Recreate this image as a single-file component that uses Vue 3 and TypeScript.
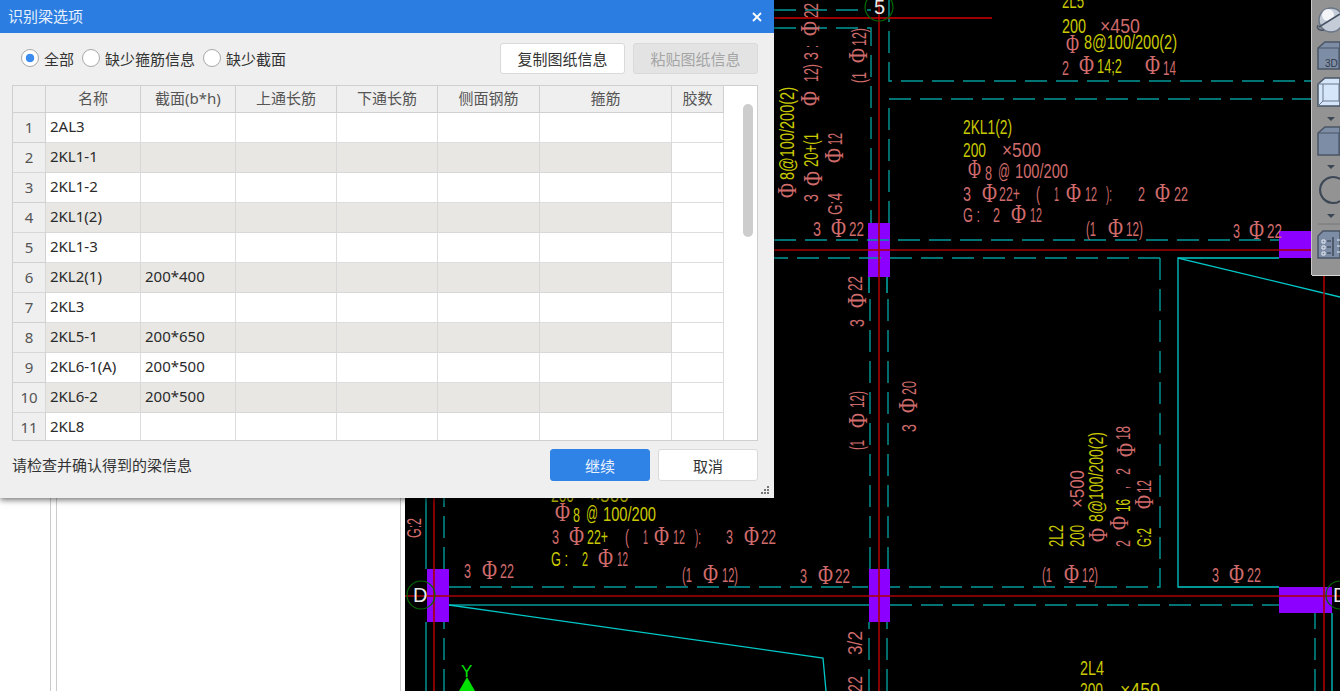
<script setup lang="ts">
interface CadText {
  x: number
  y: number
  s: string
  c: string
  w: number
  v: boolean
  phi: boolean
}

const pink = '#cf6b6b'
const yellow = '#c9c900'
const teal = '#009a9a'
const cyan = '#00c8c8'
const red = '#a80000'

const columns = ['', '名称', '截面(b*h)', '上通长筋', '下通长筋', '侧面钢筋', '箍筋', '胶数']

const rows = [
  ['2AL3', ''],
  ['2KL1-1', ''],
  ['2KL1-2', ''],
  ['2KL1(2)', ''],
  ['2KL1-3', ''],
  ['2KL2(1)', '200*400'],
  ['2KL3', ''],
  ['2KL5-1', '200*650'],
  ['2KL6-1(A)', '200*500'],
  ['2KL6-2', '200*500'],
  ['2KL8', '']
]

// 图纸上的文字
const texts: CadText[] = []
const t = (x: number, y: number, s: string, c: string, w: number, v = false) =>
  texts.push({ x, y, s, c, w, v, phi: false })
// 钢筋符号比文字大，基线下移一点
const p = (x: number, y: number, w = 15, v = false) =>
  v
    ? texts.push({ x: x + 3, y, s: 'Φ', c: pink, w, v, phi: true })
    : texts.push({ x, y: y + 3, s: 'Φ', c: pink, w, v, phi: true })

t(1062, 8, '2L5', yellow, 22)
t(1062, 33, '200', yellow, 24)
t(1100, 33, '×450', pink, 40)
p(1066, 50, 13)
t(1084, 49, '8@100/200(2)', yellow, 93)
t(1062, 75, '2', pink, 7)
p(1079, 71)
t(1097, 73, '14;2', yellow, 25)
p(1145, 71)
t(1163, 75, '14', pink, 13)

t(963, 134, '2KL1(2)', yellow, 49)
t(963, 157, '200', yellow, 23)
t(1002, 157, '×500', pink, 39)
p(968, 175, 13)
t(985, 180, '8', pink, 7)
t(998, 178, '@', pink, 12)
t(1015, 178, '100/200', pink, 53)
t(963, 201, '3', pink, 8)
p(982, 199)
t(999, 201, '22+', pink, 21)
t(1036, 201, '(', pink, 4)
t(1054, 201, '1', pink, 5)
p(1066, 199)
t(1085, 201, '12', pink, 12)
t(1106, 201, '):', pink, 6)
t(1138, 201, '2', pink, 7)
p(1155, 199)
t(1174, 201, '22', pink, 14)
t(963, 222, 'G :', pink, 17)
t(993, 222, '2', pink, 7)
p(1011, 220)
t(1030, 222, '12', pink, 12)

t(813, 236, '3', pink, 8)
p(831, 234)
t(849, 236, '22', pink, 15)
t(1086, 236, '(1', pink, 10)
p(1108, 234)
t(1126, 236, '12)', pink, 17)
t(1233, 238, '3', pink, 7)
p(1249, 236)
t(1267, 238, '22', pink, 15)

t(551, 502, '200', yellow, 23)
t(590, 502, '×500', yellow, 39)
p(555, 518)
t(573, 522, '8', yellow, 7)
t(586, 520, '@', yellow, 12)
t(603, 521, '100/200', yellow, 53)
t(552, 544, '3', pink, 7)
p(569, 542)
t(587, 544, '22+', yellow, 21)
t(625, 544, '(', pink, 4)
t(643, 544, '1', pink, 5)
p(654, 542)
t(673, 544, '12', pink, 12)
t(695, 544, '):', pink, 6)
t(726, 544, '3', pink, 7)
p(744, 542)
t(761, 544, '22', pink, 15)
t(551, 566, 'G :', yellow, 17)
t(582, 566, '2', yellow, 6)
p(598, 564)
t(617, 566, '12', pink, 11)

t(464, 578, '3', pink, 7)
p(482, 576)
t(500, 578, '22', pink, 14)
t(682, 582, '(1', pink, 10)
p(703, 580)
t(722, 582, '12)', pink, 16)
t(800, 583, '3', pink, 7)
p(818, 581)
t(835, 583, '22', pink, 15)
t(1042, 582, '(1', pink, 10)
p(1064, 580)
t(1082, 582, '12)', pink, 16)
t(1212, 582, '3', pink, 7)
p(1229, 580)
t(1247, 582, '22', pink, 14)

t(1080, 675, '2L4', yellow, 24)
t(1080, 697, '200', yellow, 23)
t(1120, 697, '×450', yellow, 40)

// 竖向文字
p(793, 198, 15, true)
t(794, 180, '8@100/200(2)', yellow, 93, true)
t(818, 202, '3', pink, 8, true)
p(819, 186, 15, true)
t(818, 167, '20+(1', yellow, 34, true)
t(842, 215, 'G:4', pink, 22, true)
p(840, 163, 15, true)
t(842, 145, '12', pink, 12, true)
t(818, 60, '3', pink, 8, true)
t(818, 48, ':', pink, 3, true)
t(818, 82, '12)', pink, 18, true)
p(816, 106, 15, true)
p(816, 36, 15, true)
t(818, 18, '22', pink, 15, true)
t(866, 83, '(1', pink, 11, true)
p(864, 63, 15, true)
t(866, 46, '12)', pink, 18, true)
t(864, 327, '3', pink, 8, true)
p(863, 308, 15, true)
t(862, 291, '22', pink, 15, true)
t(864, 450, '(1', pink, 10, true)
p(864, 428, 15, true)
t(864, 408, '12)', pink, 17, true)
t(916, 432, '3', pink, 8, true)
p(914, 413, 15, true)
t(916, 395, '20', pink, 14, true)
t(421, 538, 'G:2', pink, 20, true)
t(862, 655, '3/2', pink, 24, true)
t(862, 692, '22', pink, 16, true)

t(1063, 547, '2L2', yellow, 22, true)
t(1084, 547, '200', yellow, 22, true)
t(1084, 508, '×500', pink, 38, true)
p(1104, 542, 14, true)
t(1103, 522, '8@100/200(2)', yellow, 90, true)
t(1130, 547, '2', pink, 7, true)
p(1125, 530, 14, true)
t(1130, 512, '16', yellow, 13, true)
t(1128, 489, ',', pink, 3, true)
t(1130, 475, '2', pink, 7, true)
p(1132, 457, 14, true)
t(1130, 440, '18', pink, 14, true)
t(1151, 547, 'G:2', yellow, 19, true)
p(1150, 509, 14, true)
t(1151, 493, '12', pink, 13, true)

const transformOf = (item: CadText) =>
  item.v ? `rotate(-90 ${item.x} ${item.y})` : undefined
</script>

<template>
  <div class="screen">
    <div class="side">
      <div class="strip"></div>
      <div class="pane"></div>
    </div>

    <svg class="cad" viewBox="405 0 935 691">
      <!-- 柱子 -->
      <g fill="#8c00ff">
        <rect x="868" y="223" width="22" height="54" />
        <rect x="427" y="569" width="22" height="53" />
        <rect x="869" y="569" width="21" height="53" />
        <rect x="1279" y="231" width="40" height="27" />
        <rect x="1279" y="587" width="53" height="26" />
      </g>

      <!-- 梁线 -->
      <g fill="none" :stroke="teal" stroke-width="1.4" stroke-dasharray="22 9">
        <path d="M774 10H871" />
        <path d="M774 28H871V223" />
        <path d="M889 0V81H1312" />
        <path d="M889 223V99H1312" />
        <path d="M774 240H1279" />
        <path d="M1160 258H774" stroke-dasharray="22 9" />
        <path d="M1160 258V587H890" />
        <path d="M870 569V293" />
        <path d="M888 569V293" />
        <path d="M887 691V622" />
        <path d="M869 691V622" />
        <path d="M890 605H1279" />
        <path d="M449 587H868" />
        <path d="M444 691V622" />
        <path d="M444 569V498" />
        <path d="M1315 691V613" />
      </g>
      <g fill="none" :stroke="teal" stroke-width="1.4">
        <path d="M449 605H869" />
        <path d="M426 498V569" />
        <path d="M426 622V691" />
      </g>
      <g fill="none" :stroke="cyan" stroke-width="1.3">
        <path d="M1340 297L1178 258V587H1279" />
        <path d="M1178 258H1279" />
        <path d="M449 605L823 658L826 691" />
        <path d="M1332 613V691" />
        <path d="M869 277V293" />
        <path d="M887 277V293" />
      </g>

      <!-- 轴线 -->
      <g fill="none" :stroke="red" stroke-width="1.6">
        <path d="M879 0V691" />
        <path d="M774 250H1340" />
        <path d="M405 596H1340" />
        <path d="M434 498V691" />
        <path d="M1324 275V691" />
      </g>
      <path d="M774 18H992" stroke="#d00000" stroke-width="1.4" />

      <!-- 轴号 -->
      <g fill="none" stroke="#006a00" stroke-width="1.2">
        <circle cx="879" cy="7" r="14" />
        <circle cx="421" cy="595" r="14" />
        <circle cx="1340" cy="595" r="14" />
      </g>
      <text class="axis" x="874" y="14">5</text>
      <text class="axis" x="413" y="602">D</text>
      <text class="axis" x="1333" y="602">D</text>

      <!-- 坐标轴 -->
      <text class="axis-y" x="461" y="677">Y</text>
      <path d="M467 677L475 691H459Z" fill="#00e000" />

      <text
        v-for="(item, i) in texts"
        :key="i"
        :class="item.phi ? 'phi' : 'label'"
        :x="item.x"
        :y="item.y"
        :fill="item.c"
        :textLength="item.w"
        lengthAdjust="spacingAndGlyphs"
        :transform="transformOf(item)"
      >{{ item.s }}</text>
    </svg>

    <!-- 右上角工具条 -->
    <div class="palette">
      <svg width="28" height="275" viewBox="1312 0 28 275">
        <circle cx="1331" cy="20" r="12" fill="#c4ccd8" stroke="#6b7686" stroke-width="1.5" />
        <circle cx="1328" cy="15" r="6" fill="#f2f4f8" />
        <path d="M1319 27L1340 14M1318 25C1316 29 1320 31 1324 30" fill="none" stroke="#4a5566" stroke-width="1.5" />

        <path d="M1318 48L1325 42H1340V69H1318Z" fill="#7e8da6" stroke="#4a5566" stroke-width="1.5" />
        <path d="M1318 48H1340M1339 48V69" fill="none" stroke="#4a5566" stroke-width="1.2" />
        <text class="tool-3d" x="1325" y="67">3D</text>

        <path d="M1318 84L1325 78H1340V106H1318Z" fill="#d5e6fb" stroke="#4a5566" stroke-width="1.5" />
        <path d="M1318 84H1340M1323 84V101H1340M1323 101L1318 106M1339 84V101" fill="none" stroke="#6a7688" stroke-width="1" />
        <path d="M1327 117H1335L1331 121Z" fill="#3c4756" />

        <path d="M1318 133L1325 127H1340V155H1318Z" fill="#7e8da6" stroke="#4a5566" stroke-width="1.5" />
        <path d="M1318 133H1340M1339 133V155" fill="none" stroke="#4a5566" stroke-width="1.2" />
        <path d="M1327 165H1335L1331 169Z" fill="#3c4756" />

        <path d="M1340 179A13 13 0 1 0 1340 201" fill="none" stroke="#3c4756" stroke-width="2" />
        <path d="M1327 214H1335L1331 218Z" fill="#3c4756" />
        <path d="M1318 224H1340" stroke="#777" />

        <path d="M1318 236L1323 231H1340V258H1318Z" fill="#7e8da6" stroke="#4a5566" stroke-width="1.5" />
        <path d="M1333 237V256" stroke="#2f3946" stroke-width="1.2" />
        <g fill="none" stroke="#e8edf5" stroke-width="1">
          <path d="M1322 240H1325V243H1322ZM1322 246H1325V249H1322ZM1322 252H1325V255H1322Z" />
          <path d="M1337 240H1340M1337 246H1340M1337 252H1340" />
        </g>
        <path d="M1327 241H1331M1327 247H1331M1327 253H1331" stroke="#2f3946" />
      </svg>
    </div>

    <!-- 识别梁选项 -->
    <div class="dialog">
      <div class="title-bar">
        <span class="title">识别梁选项</span>
        <svg class="close" width="12" height="12" viewBox="0 0 12 12">
          <path d="M2 2L10 10M10 2L2 10" stroke="#fff" stroke-width="1.8" />
        </svg>
      </div>

      <div class="tools">
        <div class="radios">
          <label class="radio checked"><i></i>全部</label>
          <label class="radio"><i></i>缺少箍筋信息</label>
          <label class="radio"><i></i>缺少截面</label>
        </div>
        <button class="btn copy">复制图纸信息</button>
        <button class="btn paste">粘贴图纸信息</button>
      </div>

      <div class="table">
        <div class="table-body">
          <div class="row head">
            <div v-for="col in columns" :key="col" class="cell">{{ col }}</div>
          </div>
          <div
            v-for="(row, i) in rows"
            :key="row[0]"
            class="row"
            :class="{ shade: i % 2 === 1 }"
          >
            <div class="cell num">{{ i + 1 }}</div>
            <div class="cell text">{{ row[0] }}</div>
            <div class="cell text">{{ row[1] }}</div>
            <div class="cell"></div>
            <div class="cell"></div>
            <div class="cell"></div>
            <div class="cell"></div>
            <div class="cell last"></div>
          </div>
        </div>
        <div class="scroll"><div class="thumb"></div></div>
      </div>

      <div class="footer">
        <span class="hint">请检查并确认得到的梁信息</span>
        <button class="btn primary">继续</button>
        <button class="btn cancel">取消</button>
        <svg class="grip" width="10" height="10" viewBox="0 0 10 10" fill="#777">
          <rect x="7" y="1" width="2" height="2" />
          <rect x="4" y="4" width="2" height="2" />
          <rect x="7" y="4" width="2" height="2" />
          <rect x="1" y="7" width="2" height="2" />
          <rect x="4" y="7" width="2" height="2" />
          <rect x="7" y="7" width="2" height="2" />
        </svg>
      </div>
    </div>
  </div>
</template>

<style>
html,
body {
  margin: 0;
  background: #000;
}
</style>

<style scoped>
.screen {
  position: relative;
  display: flex;
  width: 1340px;
  height: 691px;
  overflow: hidden;
  background: #000;
  font-family: "Noto Sans", "Noto Sans CJK SC", sans-serif;
  font-size: 15px;
  color: #333;
}

/* 左侧面板 */
.side {
  display: flex;
  flex: none;
  box-sizing: border-box;
  width: 405px;
  padding: 0 4px 0 50px;
  background: #fff;
}

.strip {
  width: 5px;
  border-left: 1px solid #ccc;
}

.pane {
  flex: 1;
  border-left: 1px solid #ccc;
  border-right: 1px solid #ccc;
}

/* 图纸区域 */
.cad {
  flex: 1;
  height: 691px;
  display: block;
}

.label {
  font-family: "Liberation Sans", sans-serif;
  font-size: 20px;
}

.phi {
  font-family: "Liberation Serif", serif;
  font-size: 28px;
}

.axis {
  font-family: "Liberation Sans", sans-serif;
  font-size: 20px;
  fill: #e8e8e8;
}

.axis-y {
  font-family: "Liberation Sans", sans-serif;
  font-size: 17px;
  fill: #00e000;
}

.tool-3d {
  font-family: "Liberation Sans", sans-serif;
  font-size: 10px;
  fill: #2f3946;
}

/* 工具条 */
.palette {
  position: absolute;
  top: 0;
  right: 0;
  width: 28px;
  height: 275px;
  background: #939393;
  box-shadow: -1px 0 0 #c8c8c8, 0 1px 0 #d8d8d8;
}

.palette svg {
  display: block;
}

/* 对话框 */
.dialog {
  position: absolute;
  top: 0;
  left: 0;
  display: flex;
  flex-direction: column;
  width: 774px;
  height: 498px;
  background: #efefef;
  box-shadow: 0 2px 6px rgba(0, 0, 0, 0.55);
}

.title-bar {
  display: flex;
  flex: none;
  align-items: center;
  justify-content: space-between;
  height: 33px;
  padding: 0 11px 0 8px;
  background: #2b7de1;
}

.title {
  margin-top: -2px;
  color: #e6f0fc;
}

.tools {
  display: flex;
  flex: none;
  align-items: center;
  box-sizing: border-box;
  height: 52px;
  padding: 0 16px 2px 21px;
}

.radios {
  display: flex;
  flex: 1;
  gap: 8px;
}

.radio {
  display: flex;
  align-items: center;
  gap: 5px;
}

.radio i {
  box-sizing: border-box;
  width: 18px;
  height: 18px;
  border: 1px solid #a8a8a8;
  border-radius: 50%;
  background: #fff;
}

.radio.checked i {
  background: radial-gradient(circle, #3d8df0 0 4px, #fff 4.6px);
}

.btn {
  box-sizing: border-box;
  height: 31px;
  padding: 0;
  border: 1px solid #d9d9d9;
  border-radius: 3px;
  background: #fff;
  font: inherit;
  color: #333;
}

.copy,
.paste {
  width: 125px;
}

.paste {
  margin-left: 8px;
  background: #e3e3e3;
  color: #a5a5a5;
}

.table {
  display: flex;
  flex: none;
  box-sizing: border-box;
  width: 746px;
  height: 356px;
  margin-left: 12px;
  overflow: hidden;
  border: 1px solid #cfcfcf;
}

.table-body {
  width: 711px;
  flex: none;
}

.row {
  display: grid;
  grid-template-columns: 33px 95px 95px 101px 101px 102px 132px 52px;
  height: 30px;
  background: #fff;
}

.row.head {
  height: 27px;
  background: #efefef;
  color: #555;
}

.cell {
  box-sizing: border-box;
  border-right: 1px solid #ddd;
  border-bottom: 1px solid #ddd;
  line-height: 29px;
  white-space: nowrap;
}

.head .cell {
  border-color: #d0d0d0;
  line-height: 25px;
  text-align: center;
}

.num {
  background: #efefef;
  border-color: #d0d0d0;
  color: #555;
  text-align: center;
}

.text {
  padding-left: 4px;
  color: #2b2b2b;
  line-height: 27px;
}

.shade .cell {
  background: #e8e7e4;
  border-color: #d8d8d8;
}

.shade .cell.num {
  background: #efefef;
}

.shade .cell.last {
  background: #fff;
  border-color: #ddd;
}

.scroll {
  flex: 1;
  background: #fff;
  padding: 18px 0 0 19px;
}

.thumb {
  width: 10px;
  height: 133px;
  border-radius: 5px;
  background: #cdcdcd;
}

.footer {
  position: relative;
  display: flex;
  flex: 1;
  align-items: flex-start;
  padding: 8px 16px 0 12px;
}

.hint {
  flex: 1;
  line-height: 33px;
}

.primary {
  width: 100px;
  height: 32px;
  border-color: #2f82e6;
  background: #2f82e6;
  color: #e8f2fd;
}

.cancel {
  width: 100px;
  height: 32px;
  margin-left: 8px;
}

.grip {
  position: absolute;
  right: 4px;
  bottom: 3px;
}
</style>
